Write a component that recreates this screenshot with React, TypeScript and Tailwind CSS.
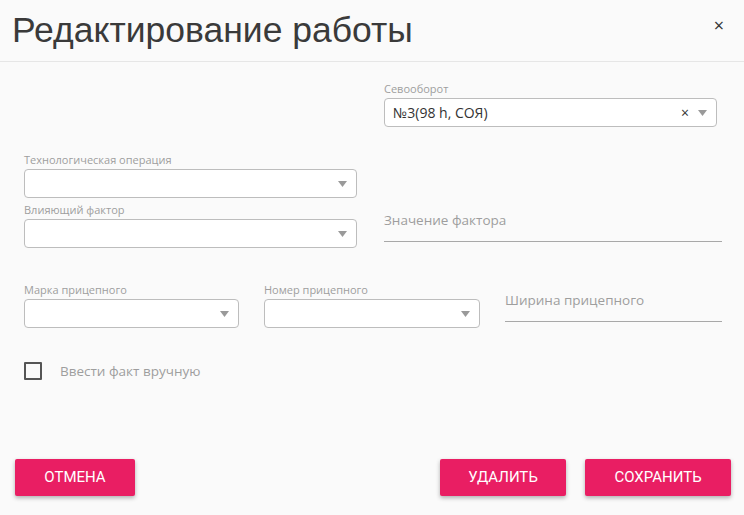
import React from "react";

function Arrow() {
  return (
    <svg width="9" height="6" viewBox="0 0 9 6" className="shrink-0">
      <path d="M0 0h9L4.5 6z" fill="#9a9a9a" />
    </svg>
  );
}

function Select({ label, value, clearable }: { label: string; value?: string; clearable?: boolean }) {
  return (
    <div className="flex flex-col">
      <span className="text-[11px] leading-[14px] text-[#9e9e9e] mb-[2px]">{label}</span>
      <div className="h-[29px] bg-white border border-[#bdbdbd] rounded-[4px] flex items-center pl-[8px] pr-[9px]">
        <span className="flex-1 text-[14px] text-[#333]">{value}</span>
        {clearable && <span className="text-[14px] text-[#333] mr-[9px] leading-none">×</span>}
        <Arrow />
      </div>
    </div>
  );
}

function LineInput({ placeholder }: { placeholder: string }) {
  return (
    <div className="border-b border-[#a8a8a8] pb-[10px]">
      <span className="text-[13.5px] text-[#9e9e9e]">{placeholder}</span>
    </div>
  );
}

function Btn({ children, w }: { children: React.ReactNode; w: string }) {
  return (
    <button
      className={`${w} h-[37px] bg-[#e91e63] text-white text-[15px] rounded-[2px] shadow-[0_2px_4px_rgba(0,0,0,0.3)]`}
      style={{ fontFamily: "Roboto, sans-serif" }}
    >
      {children}
    </button>
  );
}

export default function App() {
  return (
    <div className="w-[744px] h-[515px] bg-[#fafafa] flex flex-col" style={{ fontFamily: "'Open Sans', sans-serif" }}>
      {/* Header */}
      <div className="h-[62px] border-b border-[#e6e6e6] flex items-center justify-between pl-[12px] pr-[20px]">
        <h1 className="text-[35.5px] text-[#3a3a3a] font-normal" style={{ fontFamily: "'Liberation Sans', Arial, sans-serif" }}>
          Редактирование работы
        </h1>
        <span className="text-[18px] text-[#333] leading-none -mt-[12px]">×</span>
      </div>

      {/* Body */}
      <div className="flex-1 pl-[24px] pr-[22px] pt-[20px]">
        <div className="grid grid-cols-[333px_1fr] gap-x-[27px]">
          <div />
          <div className="pr-[5px]">
            <Select label="Севооборот" value="№3(98 h, СОЯ)" clearable />
          </div>
        </div>

        <div className="grid grid-cols-[333px_1fr] gap-x-[27px] mt-[26px]">
          <div className="flex flex-col gap-[5px]">
            <Select label="Технологическая операция" />
            <Select label="Влияющий фактор" />
          </div>
          <div className="flex flex-col justify-end pb-[6px]">
            <LineInput placeholder="Значение фактора" />
          </div>
        </div>

        <div className="grid grid-cols-[215px_216px_1fr] gap-x-[25px] mt-[35px]">
          <Select label="Марка прицепного" />
          <Select label="Номер прицепного" />
          <div className="pt-[4px]">
            <LineInput placeholder="Ширина прицепного" />
          </div>
        </div>

        <div className="flex items-center mt-[33px]">
          <div className="w-[18px] h-[18px] border-2 border-[#555] rounded-[1px]" />
          <span className="ml-[18px] text-[13.5px] text-[#9e9e9e]">Ввести факт вручную</span>
        </div>
      </div>

      {/* Footer */}
      <div className="flex items-center justify-between pl-[15px] pr-[13px] pb-[19px]">
        <Btn w="w-[120px]">ОТМЕНА</Btn>
        <div className="flex gap-[19px]">
          <Btn w="w-[126px]">УДАЛИТЬ</Btn>
          <Btn w="w-[146px]">СОХРАНИТЬ</Btn>
        </div>
      </div>
    </div>
  );
}
